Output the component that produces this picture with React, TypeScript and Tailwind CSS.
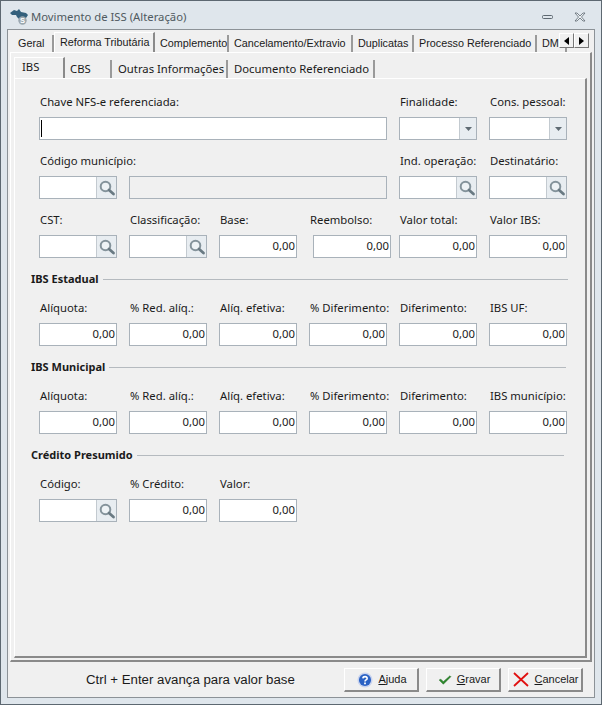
import type { ReactNode } from "react";

const uiFont = "font-['Noto_Sans','Open_Sans',sans-serif]";

function SearchIcon() {
    return (
        <svg width="18" height="18" viewBox="0 0 18 18" fill="none">
            <circle cx="7.5" cy="7.5" r="4.8" stroke="#84939b" strokeWidth="2" fill="#eef3f6" />
            <path d="M11 11L15.5 15" stroke="#6a7a83" strokeWidth="2.8" strokeLinecap="round" />
        </svg>
    );
}

function Logo() {
    return (
        <svg width="19" height="16" viewBox="0 0 19 16">
            <path d="M0 4L4 1L7 2L9 0L11 3L16 4L18 6L16 9L13 12L10 14L9 10L7 8L6 6L2 6Z" fill="#33607c" />
            <circle cx="12.5" cy="11.5" r="4.2" fill="#9aa7af" />
            <text x="12.5" y="14.2" fontSize="7.5" fontWeight="700" fill="#ffffff" textAnchor="middle" fontFamily="Liberation Sans">S</text>
        </svg>
    );
}

function HelpIcon() {
    return (
        <svg width="16" height="16" viewBox="0 0 18 18">
            <circle cx="9" cy="9" r="8.5" fill="#c9d3ee" />
            <circle cx="9" cy="9" r="6.8" fill="#2a62c4" />
            <path d="M6.6 7.2C6.8 4.6 11.4 4.6 11.4 7.2C11.4 8.9 9 8.9 9 10.6" fill="none" stroke="#ffffff" strokeWidth="1.8" />
            <rect x="8" y="11.8" width="2" height="2" fill="#ffffff" />
        </svg>
    );
}

function CheckIcon() {
    return (
        <svg width="14" height="10" viewBox="0 0 16 12">
            <path d="M1 6L3 5L6 8L14 1L15 2L6 11Z" fill="#2e8b2e" stroke="#176317" strokeWidth="0.6" />
        </svg>
    );
}

function CrossIcon() {
    return (
        <svg width="16" height="15" viewBox="0 0 16 15">
            <path d="M1 1L15 14M15 1L1 14" stroke="#e01010" strokeWidth="1.8" />
        </svg>
    );
}

function Field({ label, children, className = "" }: { label: string; children?: ReactNode; className?: string }) {
    return (
        <div className={"flex flex-col w-[78px] " + className}>
            <div className="h-[22px] pl-px leading-[13px] text-[11.3px] text-[#1a1a1a] whitespace-nowrap">{label}</div>
            {children}
        </div>
    );
}

function NumberBox({ className = "" }: { className?: string }) {
    return (
        <div className={"h-[23px] w-[78px] shrink-0 bg-white border border-[#a9b2ba] pr-px flex items-center justify-end text-[11.3px] text-[#1a1a1a] " + className}>
            0,00
        </div>
    );
}

function LookupBox() {
    return (
        <div className="h-[23px] w-[78px] bg-white border border-[#a9b2ba] flex justify-end">
            <div className="w-[20px] bg-[#e8edf1] border-l border-[#c3cad0] flex items-center justify-center">
                <SearchIcon />
            </div>
        </div>
    );
}

function ComboBox() {
    return (
        <div className="h-[23px] w-[78px] bg-white border border-[#a9b2ba] flex justify-end">
            <div className="w-[17px] bg-[#e8edf1] border-l border-[#c3cad0] flex items-center justify-center">
                <svg width="7" height="4" viewBox="0 0 7 4"><path d="M0 0H7L3.5 4Z" fill="#5f6b73" /></svg>
            </div>
        </div>
    );
}

function Row({ children }: { children: ReactNode }) {
    return <div className="ml-[24px] grid grid-cols-[repeat(6,78px)] gap-x-[12px]">{children}</div>;
}

function Section({ title, lineClass }: { title: string; lineClass: string }) {
    return (
        <div className="h-[43px] pt-[13px] ml-[16px] flex items-start gap-[4px]">
            <span className="leading-[16px] text-[11px] font-bold text-[#1a1a1a] whitespace-nowrap">{title}</span>
            <div className={"mt-[8px] h-px bg-[#b5babf] " + lineClass}></div>
        </div>
    );
}

function OuterTab({ label, width, active = false }: { label: string; width: string; active?: boolean }) {
    return (
        <div
            className={
                active
                    ? width + " h-[20px] shrink-0 pl-[5px] pt-[1px] leading-[16px] font-['Liberation_Sans',sans-serif] text-[10.8px] text-[#1a1a1a] bg-[#f0f0f0] border-t border-l border-white border-r-2 border-r-[#8a8a8a] whitespace-nowrap overflow-hidden"
                    : width + " h-[17px] shrink-0 pl-[5px] leading-[17px] font-['Liberation_Sans',sans-serif] text-[10.8px] text-[#1a1a1a] border-r-2 border-r-[#9a9a9a] whitespace-nowrap overflow-hidden"
            }
        >
            {label}
        </div>
    );
}

function InnerTab({ label, width, active = false }: { label: string; width: string; active?: boolean }) {
    return (
        <div
            className={
                active
                    ? width + " h-[21px] shrink-0 pl-[7px] leading-[18px] text-[11.3px] text-[#1a1a1a] bg-[#f0f0f0] border-t border-l border-white border-r-2 border-r-[#8a8a8a] whitespace-nowrap"
                    : width + " h-[18px] shrink-0 pl-[5px] leading-[18px] text-[11.3px] text-[#1a1a1a] border-r-2 border-r-[#9a9a9a] whitespace-nowrap"
            }
        >
            {label}
        </div>
    );
}

function ActionButton({ icon, letter, rest, gap }: { icon: ReactNode; letter: string; rest: string; gap: string }) {
    return (
        <div className={"w-[75px] h-[24px] pl-[2px] bg-[#f0f0f0] border-t border-l border-white border-r-2 border-b-2 border-r-[#8a8a8a] border-b-[#8a8a8a] flex items-center justify-center font-['Liberation_Sans',sans-serif] text-[11px] text-[#1a1a1a] " + gap}>
            {icon}
            <span><u>{letter}</u>{rest}</span>
        </div>
    );
}

export default function App() {
    return (
        <div className={"w-[602px] h-[705px] bg-[#dfe6ec] border border-[#5d6871] flex flex-col px-[6px] pb-[6px] " + uiFont}>
            {/* barra de titulo */}
            <div className="h-[28px] shrink-0 flex items-center pt-[4px] pl-[3px] pr-[9px]">
                <Logo />
                <span className="ml-[2px] text-[11.3px] text-[#505a60]">Movimento de ISS (Alteração)</span>
                <svg className="ml-auto" width="44" height="10" viewBox="0 0 44 10" fill="none">
                    <rect x="0.5" y="3.5" width="10" height="3" rx="1" stroke="#5d6871" />
                    <path d="M33 1H35L38 4L41 1H43L39.5 5L43 9H41L38 6L35 9H33L36.5 5Z" stroke="#5d6871" strokeWidth="0.8" fill="#eef2f5" />
                </svg>
            </div>

            <div className="flex-1 min-h-0 bg-[#f0f0f0] border border-[#8c9297] flex flex-col">
                {/* abas principais */}
                <div className="relative h-[22px] shrink-0 ml-[5px] mr-[5px] flex items-end overflow-hidden">
                    <OuterTab label="Geral" width="w-[41px]" />
                    <OuterTab label="Reforma Tributária" width="w-[101px]" active />
                    <OuterTab label="Complemento" width="w-[74px]" />
                    <OuterTab label="Cancelamento/Extravio" width="w-[124px]" />
                    <OuterTab label="Duplicatas" width="w-[61px]" />
                    <OuterTab label="Processo Referenciado" width="w-[123px]" />
                    <OuterTab label="DMS" width="w-[30px]" />
                    <div className="absolute right-0 top-[3px] flex">
                        <div className="w-[15px] h-[15px] bg-[#f0f0f0] border-t border-l border-white border-r border-b border-r-[#777777] border-b-[#777777] flex items-center justify-center">
                            <svg width="5" height="8" viewBox="0 0 5 8"><path d="M5 0V8L0 4Z" fill="#000000" /></svg>
                        </div>
                        <div className="w-[15px] h-[15px] bg-[#f0f0f0] border-t border-l border-white border-r border-b border-r-[#777777] border-b-[#777777] flex items-center justify-center">
                            <svg width="5" height="8" viewBox="0 0 5 8"><path d="M0 0V8L5 4Z" fill="#000000" /></svg>
                        </div>
                    </div>
                </div>

                <div className="mx-[2px] h-[610px] shrink-0 border-t border-l border-white border-r-2 border-b-2 border-r-[#8a8a8a] border-b-[#8a8a8a] flex flex-col pl-[3px] pr-[3px] pb-[2px]">
                    {/* abas internas */}
                    <div className="h-[25px] shrink-0 flex items-end">
                        <InnerTab label="IBS" width="w-[51px]" active />
                        <InnerTab label="CBS" width="w-[47px]" />
                        <InnerTab label="Outras Informações" width="w-[116px] !pl-[6px]" />
                        <InnerTab label="Documento Referenciado" width="w-[147px] !pl-[6px]" />
                    </div>

                    <div className="flex-1 min-h-0 border-t border-l border-white border-r-2 border-b-2 border-r-[#8a8a8a] border-b-[#8a8a8a] pt-[16px] flex flex-col">
                        <Row>
                            <Field label="Chave NFS-e referenciada:" className="col-span-4 !w-[348px]">
                                <div className="h-[23px] bg-white border border-[#a9b2ba] flex items-center pl-px">
                                    <div className="w-px h-[17px] bg-black"></div>
                                </div>
                            </Field>
                            <Field label="Finalidade:"><ComboBox /></Field>
                            <Field label="Cons. pessoal:"><ComboBox /></Field>
                        </Row>
                        <div className="h-[14px] shrink-0"></div>
                        <Row>
                            <Field label="Código município:"><LookupBox /></Field>
                            <div className="col-span-3 pt-[22px]">
                                <div className="h-[23px] w-[258px] bg-[#f0f0f0] border border-[#a9b2ba]"></div>
                            </div>
                            <Field label="Ind. operação:"><LookupBox /></Field>
                            <Field label="Destinatário:"><LookupBox /></Field>
                        </Row>
                        <div className="h-[14px] shrink-0"></div>
                        <Row>
                            <Field label="CST:"><LookupBox /></Field>
                            <Field label="Classificação:"><LookupBox /></Field>
                            <Field label="Base:"><NumberBox /></Field>
                            <Field label="Reembolso:" className="h-[45px]"><NumberBox className="ml-[4px] mt-px" /></Field>
                            <Field label="Valor total:"><NumberBox /></Field>
                            <Field label="Valor IBS:"><NumberBox /></Field>
                        </Row>

                        <Section title="IBS Estadual" lineClass="w-[465px]" />
                        <Row>
                            <Field label="Alíquota:"><NumberBox /></Field>
                            <Field label="% Red. alíq.:"><NumberBox /></Field>
                            <Field label="Alíq. efetiva:"><NumberBox /></Field>
                            <Field label="% Diferimento:"><NumberBox /></Field>
                            <Field label="Diferimento:"><NumberBox /></Field>
                            <Field label="IBS UF:"><NumberBox /></Field>
                        </Row>

                        <Section title="IBS Municipal" lineClass="w-[457px]" />
                        <Row>
                            <Field label="Alíquota:"><NumberBox /></Field>
                            <Field label="% Red. alíq.:"><NumberBox /></Field>
                            <Field label="Alíq. efetiva:"><NumberBox /></Field>
                            <Field label="% Diferimento:"><NumberBox /></Field>
                            <Field label="Diferimento:"><NumberBox /></Field>
                            <Field label="IBS município:"><NumberBox /></Field>
                        </Row>

                        <Section title="Crédito Presumido" lineClass="w-[427px]" />
                        <Row>
                            <Field label="Código:"><LookupBox /></Field>
                            <Field label="% Crédito:"><NumberBox /></Field>
                            <Field label="Valor:"><NumberBox /></Field>
                        </Row>
                    </div>
                </div>

                {/* rodape */}
                <div className="flex-1 min-h-0 flex items-center pl-[78px] pr-[11px] pt-[1px]">
                    <span className="font-['Liberation_Sans',sans-serif] text-[13.25px] text-[#1a1a1a]">Ctrl + Enter avança para valor base</span>
                    <div className="ml-auto flex gap-[7px]">
                        <ActionButton icon={<HelpIcon />} letter="A" rest="juda" gap="gap-[5px]" />
                        <ActionButton icon={<CheckIcon />} letter="G" rest="ravar" gap="gap-[5px]" />
                        <ActionButton icon={<CrossIcon />} letter="C" rest="ancelar" gap="gap-[5px]" />
                    </div>
                </div>
            </div>
        </div>
    );
}
